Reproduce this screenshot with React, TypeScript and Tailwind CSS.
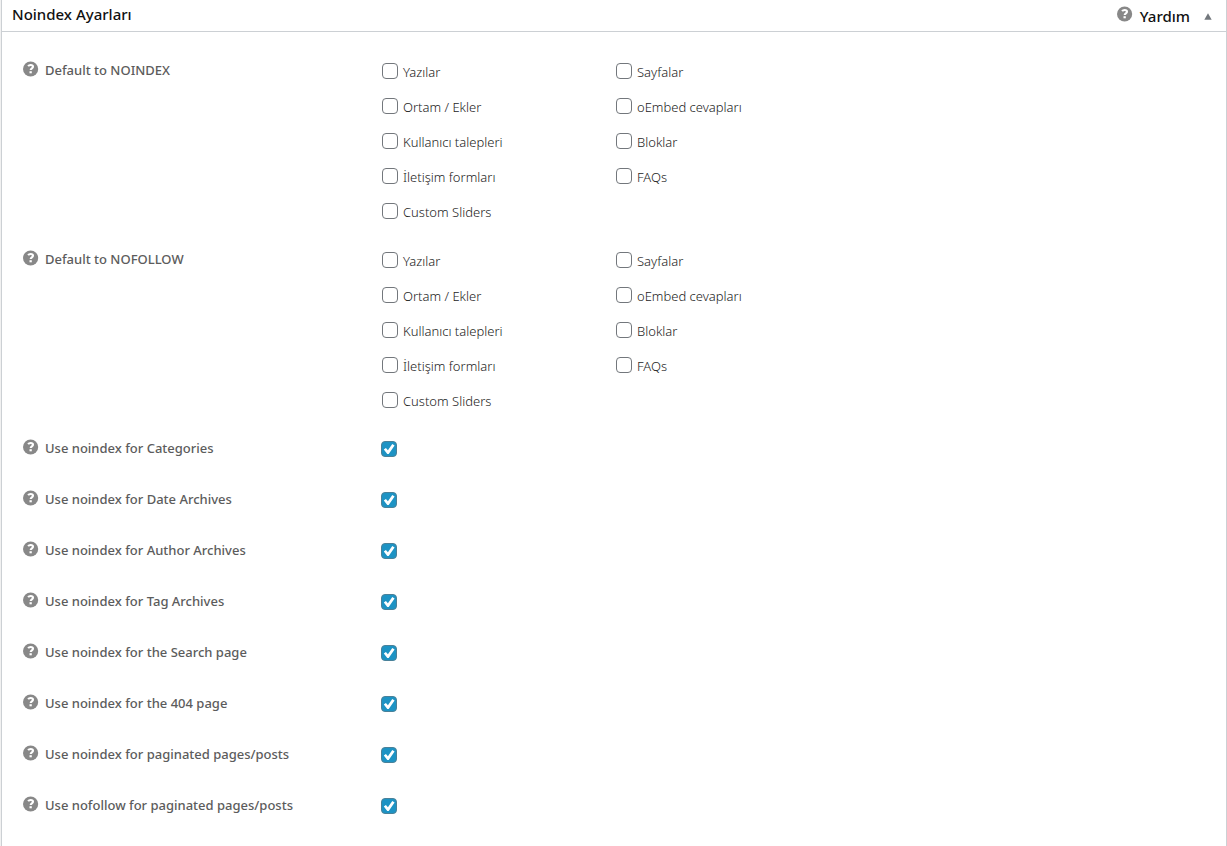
import React, { useState } from 'react';

const postTypes = [
  'Yazılar',
  'Sayfalar',
  'Ortam / Ekler',
  'oEmbed cevapları',
  'Kullanıcı talepleri',
  'Bloklar',
  'İletişim formları',
  'FAQs',
  'Custom Sliders',
];

const groups = [
  { id: 'noindex', label: 'Default to NOINDEX' },
  { id: 'nofollow', label: 'Default to NOFOLLOW' },
];

const toggles = [
  { id: 'categories', label: 'Use noindex for Categories' },
  { id: 'date', label: 'Use noindex for Date Archives' },
  { id: 'author', label: 'Use noindex for Author Archives' },
  { id: 'tag', label: 'Use noindex for Tag Archives' },
  { id: 'search', label: 'Use noindex for the Search page' },
  { id: 'notfound', label: 'Use noindex for the 404 page' },
  { id: 'paginated-noindex', label: 'Use noindex for paginated pages/posts' },
  { id: 'paginated-nofollow', label: 'Use nofollow for paginated pages/posts' },
];

function HelpIcon() {
  return (
    <svg viewBox="0 0 16 16" className="size-4 shrink-0" aria-hidden="true">
      <circle cx="7.6" cy="8" r="7.6" fill="#888888" />
      <path
        d="M5.1 5.2C5.7 4.4 6.6 4 7.6 4c1.4 0 2.4.7 2.4 1.8 0 1.5-2.3 1.6-2.3 3.3"
        fill="none"
        stroke="#ffffff"
        strokeWidth="2.1"
      />
      <rect x="6.5" y="10.2" width="2.3" height="2.1" fill="#ffffff" />
    </svg>
  );
}

function HelpButton({ topic }: { topic: string }) {
  return (
    <button type="button" aria-label={`${topic} help`} className="shrink-0 cursor-pointer pb-0.5">
      <HelpIcon />
    </button>
  );
}

function Checkbox({ id, initial }: { id: string; initial: boolean }) {
  const [checked, setChecked] = useState(initial);
  return (
    <span className="grid size-4 shrink-0">
      <input
        id={id}
        type="checkbox"
        checked={checked}
        onChange={(event) => setChecked(event.target.checked)}
        className="col-start-1 row-start-1 size-4 appearance-none rounded border border-[#73777c] bg-white checked:border-[#4a8199] checked:bg-[#1d93c4]"
      />
      {checked && (
        <svg
          viewBox="0 0 16 16"
          className="pointer-events-none col-start-1 row-start-1 size-4"
          aria-hidden="true"
        >
          <path d="M2.8 8.4 4.9 6.9l2 2.3L11.3 3l2.3 1.5L7.7 13H6.3z" fill="#ffffff" />
        </svg>
      )}
    </span>
  );
}

export default function App() {
  const [open, setOpen] = useState(true);
  return (
    <main className="min-h-screen bg-[#f1f1f1] pl-px font-['Noto_Sans',sans-serif]">
      <section className="min-h-screen border-x border-[#ccd0d4] bg-white">
        <header className="flex h-8 items-center justify-between border-b border-[#ccd0d4] pr-[14px] pl-[10px]">
          <h2 className="pb-1 text-[15px] leading-5 font-medium text-[#111111]">Noindex Ayarları</h2>
          <div className="flex items-center">
            <a href="#help" className="flex gap-[7px] text-[15px] leading-5 font-medium text-[#111111]">
              <HelpIcon />
              <span>Yardım</span>
            </a>
            <button
              type="button"
              aria-label="Toggle panel"
              aria-expanded={open}
              onClick={() => setOpen(!open)}
              className="ml-[14px] cursor-pointer pt-0.5"
            >
              <svg viewBox="0 0 8 7" className="h-[7px] w-2" aria-hidden="true">
                <path d="M4 0.3 7.7 6.7H0.3z" fill="#72777c" />
              </svg>
            </button>
          </div>
        </header>
        {open && (
          <form className="flex flex-col gap-[14px] px-[21px] pt-[22px] pb-5">
            {groups.map((group) => (
              <div key={group.id} role="group" aria-labelledby={`${group.id}-label`} className="flex">
                <div className="flex h-8 w-[358px] shrink-0 items-center gap-1.5">
                  <HelpButton topic={group.label} />
                  <span id={`${group.id}-label`} className="text-[13px] leading-5 font-medium text-[#5c5c5c]">
                    {group.label}
                  </span>
                </div>
                <ul className="grid grid-cols-[234px_234px] pl-px">
                  {postTypes.map((type, index) => (
                    <li key={type} className="flex h-[35px] items-center gap-[5px] pb-px">
                      <Checkbox id={`${group.id}-${index}`} initial={false} />
                      <label
                        htmlFor={`${group.id}-${index}`}
                        className="pt-0.5 text-[13px] leading-5 font-light text-[#1c1c1c]"
                      >
                        {type}
                      </label>
                    </li>
                  ))}
                </ul>
              </div>
            ))}
            {toggles.map((toggle) => (
              <div key={toggle.id} className="flex h-[37px]">
                <div className="flex h-8 w-[358px] shrink-0 items-center gap-1.5">
                  <HelpButton topic={toggle.label} />
                  <label htmlFor={toggle.id} className="text-[13px] leading-5 font-medium text-[#5c5c5c]">
                    {toggle.label}
                  </label>
                </div>
                <div className="flex h-[35px] items-center pb-px">
                  <Checkbox id={toggle.id} initial />
                </div>
              </div>
            ))}
          </form>
        )}
      </section>
    </main>
  );
}
